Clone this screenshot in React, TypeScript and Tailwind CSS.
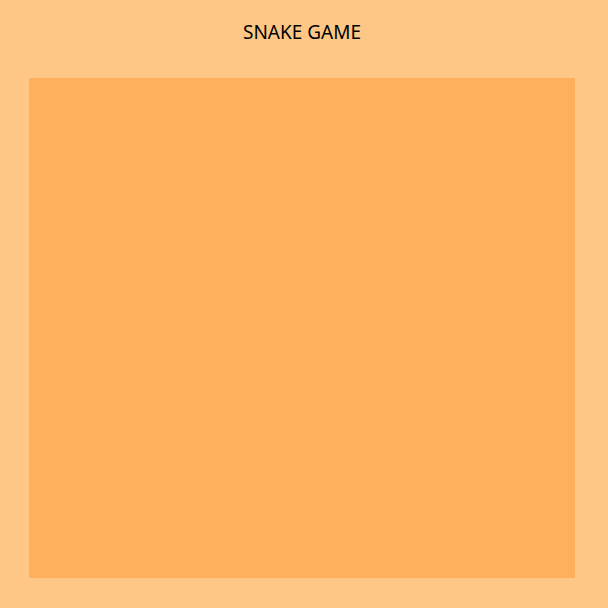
export default function App() {
  return (
    <div className="w-[608px] h-[608px] bg-[#fec785] flex flex-col">
      {/* title */}
      <div className="h-[78px] pt-[19px] pr-[4px] text-center text-[19px] leading-[26px] text-black font-['Noto_Sans',sans-serif]">
        SNAKE GAME
      </div>
      {/* board */}
      <div className="w-[546px] h-[500px] ml-[29px] bg-[#ffb05c]" />
    </div>
  );
}
